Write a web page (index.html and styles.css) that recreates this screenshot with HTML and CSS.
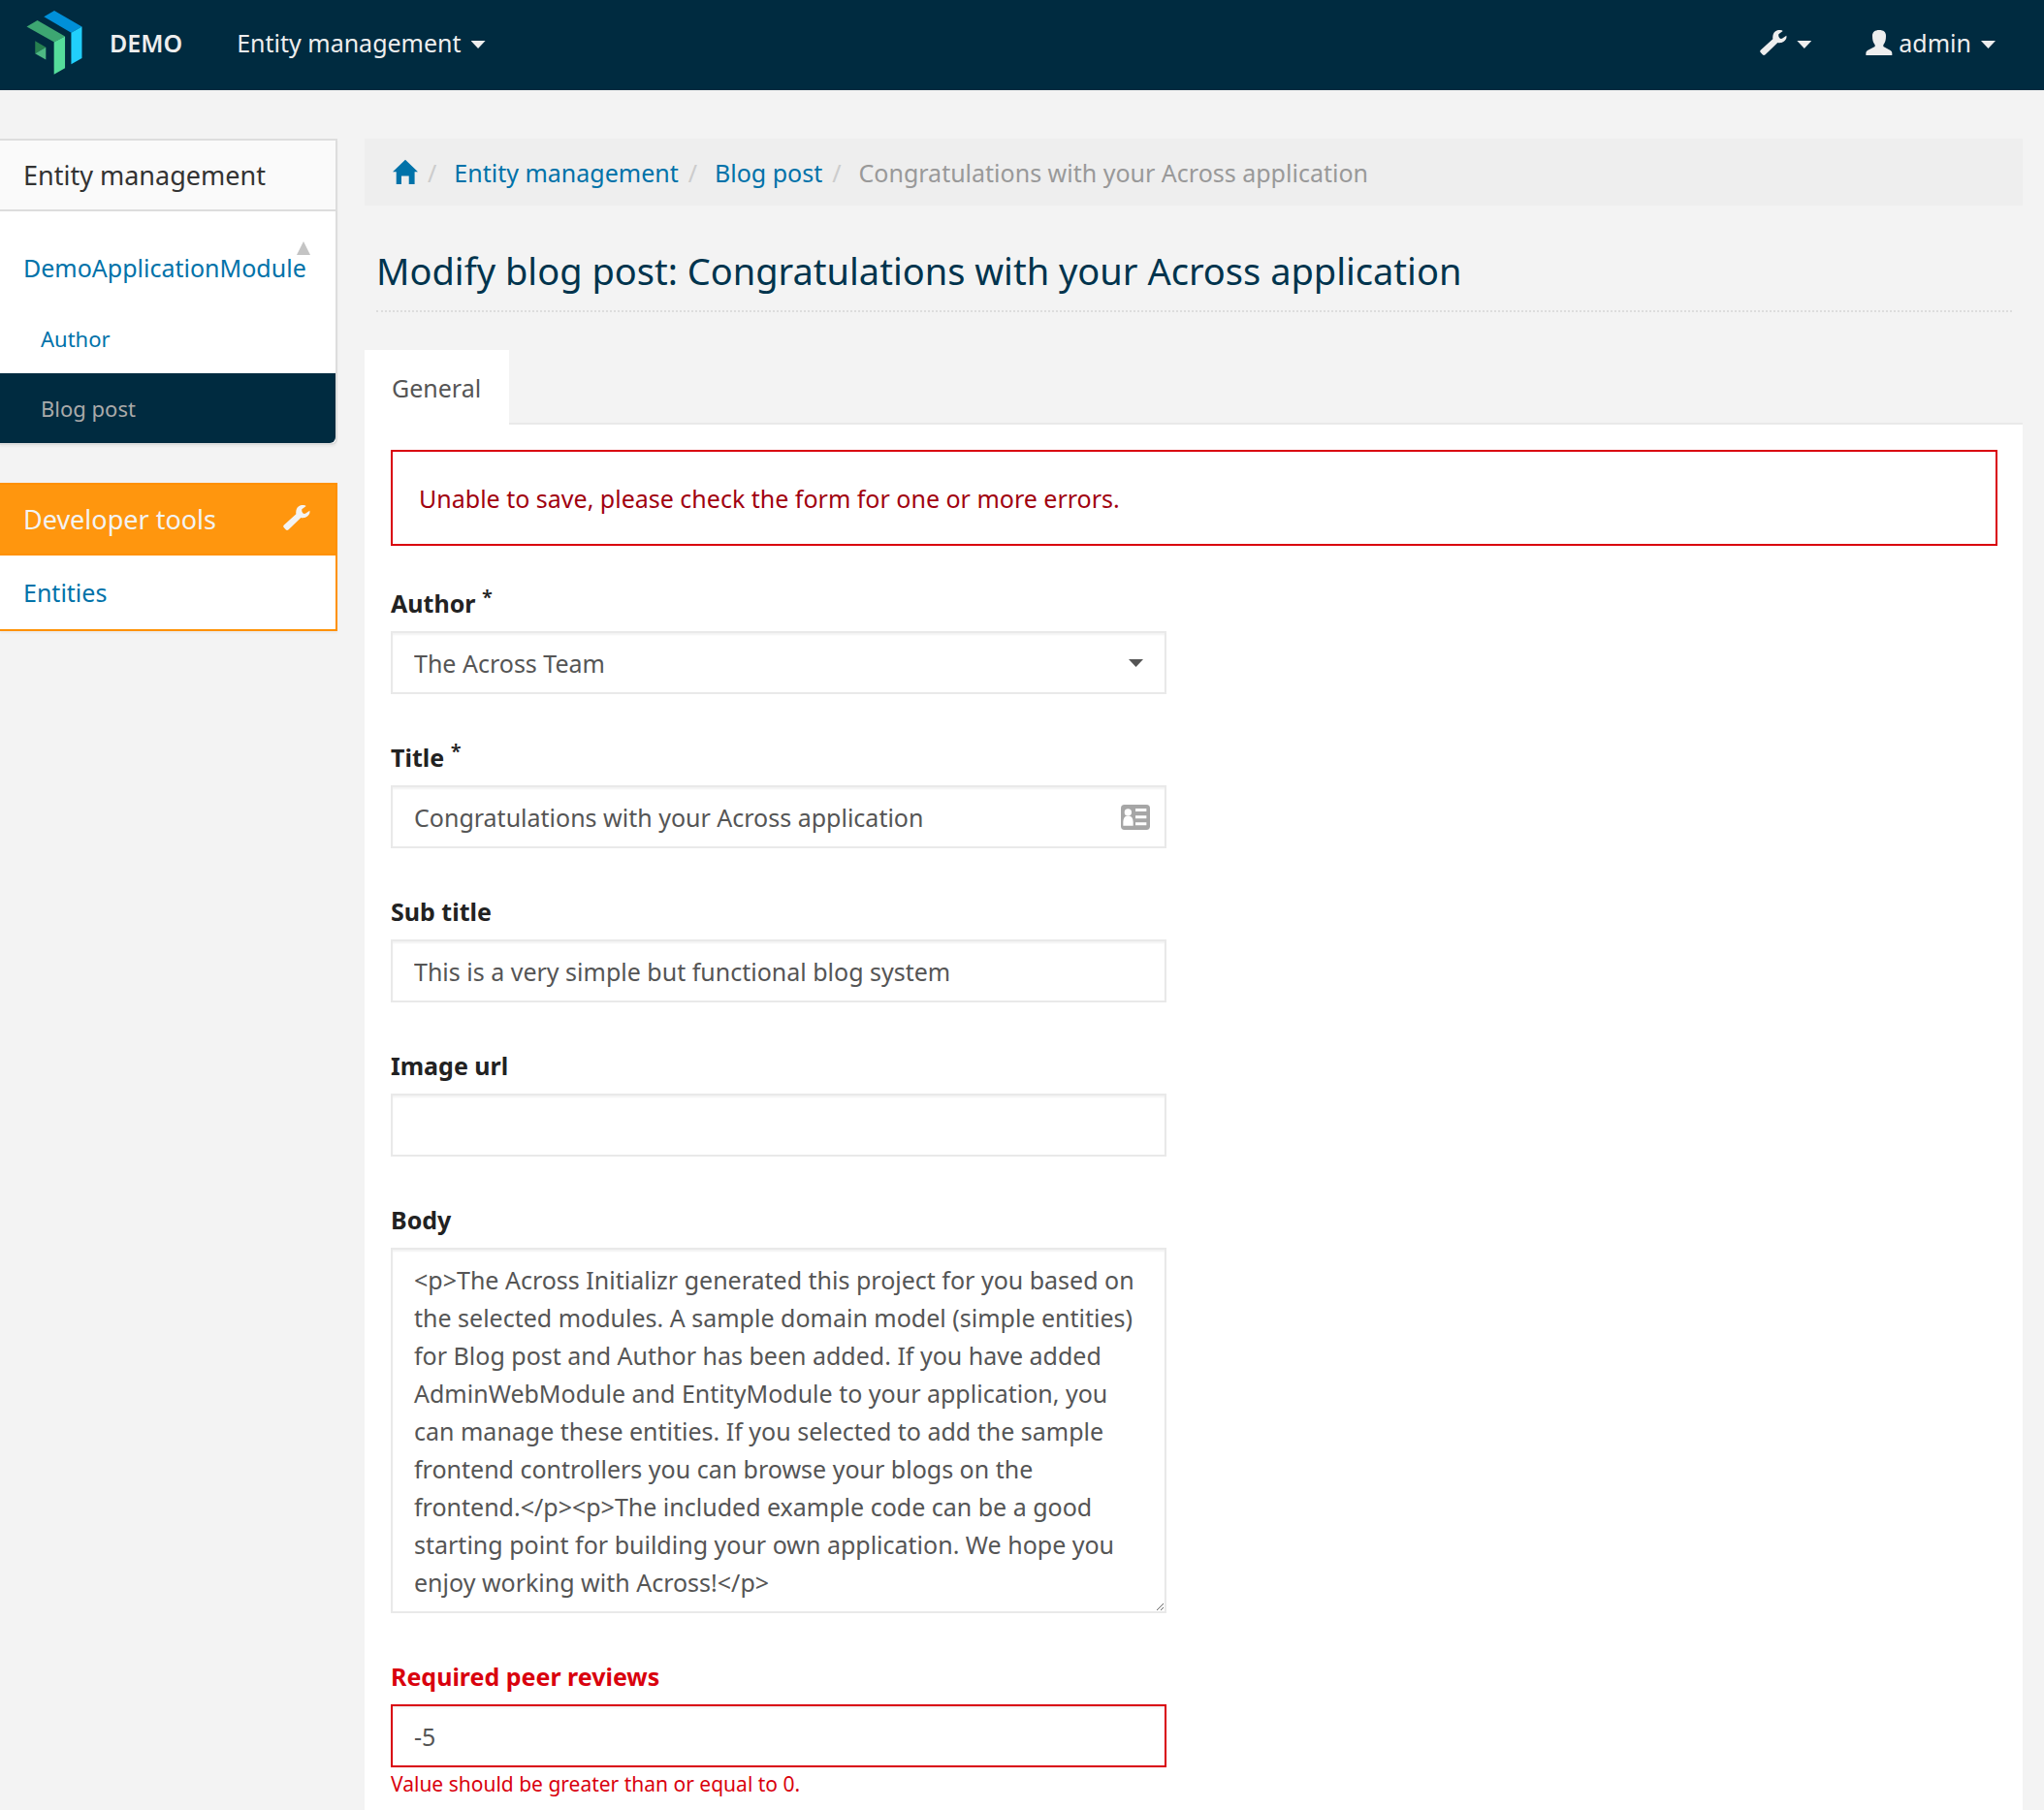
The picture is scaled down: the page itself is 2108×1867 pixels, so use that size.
FILE: index.html
```html
<!DOCTYPE html>
<html lang="en">
<head>
<meta charset="utf-8">
<title>Modify blog post: Congratulations with your Across application</title>
<link rel="stylesheet" href="styles.css">
</head>
<body>
<svg class="sprite" aria-hidden="true">
  <symbol id="wrench" viewBox="0 0 84 78"><path d="M2 62 40 28C38 14 44 4 54 1 62-1 68 0 71 3L58 13C57 18 58 22 61 25 64 28 68 27 71 25L82 17C84 25 80 32 73 36 67 40 60 40 55 39L17 76Q12 80 8 76L2 69Q-1 66 2 62Z"/></symbol>
  <symbol id="user" viewBox="0 0 82 78"><path d="M41 0C55 0 62 6 62 18 62 30 60 38 54 46V51L76 63Q81 66 81 71V78H0V71Q0 66 5 63L28 51V46C22 38 20 30 20 18 20 6 28 0 41 0Z"/></symbol>
  <symbol id="home" viewBox="0 0 84 82"><path d="M42 0 84 40H73V81H54V54H29V81H12V40H0Z"/></symbol>
</svg>

<header class="navbar">
  <a class="brand" href="#">
    <svg class="logo" viewBox="82 33 170 197" aria-hidden="true">
      <path fill="#0090d9" d="M135 52 167 33 252 82 219 101Z"/>
      <path fill="#21cffc" d="M219 101 252 82V179L219 198Z"/>
      <path fill="#3da672" d="M82 82 115 63 200 112 167 130Z"/>
      <path fill="#55dd9b" d="M166 130 200 112V210L166 229Z"/>
      <path fill="#26804f" d="M108 126 141 146 108 165Z"/>
      <path fill="#4db883" d="M108 165 141 146V184Z"/>
    </svg>
    <span>DEMO</span>
  </a>
  <nav class="menu">
    <button type="button" class="toggle">Entity management <span class="caret"></span></button>
  </nav>
  <div class="tools">
    <button type="button" class="toggle" aria-label="Developer tools"><svg class="icon"><use href="#wrench"/></svg><span class="caret"></span></button>
    <button type="button" class="toggle user"><svg class="icon" aria-hidden="true"><use href="#user"/></svg>admin <span class="caret"></span></button>
  </div>
</header>

<div class="page">
  <aside class="sidebar">
    <nav class="panel">
      <h2 class="panel-title">Entity management</h2>
      <a class="module" href="#">DemoApplicationModule<span class="fold"></span></a>
      <a class="entity" href="#">Author</a>
      <a class="entity active" href="#">Blog post</a>
    </nav>
    <nav class="panel developer">
      <h2 class="panel-title">Developer tools <svg class="icon" aria-hidden="true"><use href="#wrench"/></svg></h2>
      <a class="tool" href="#">Entities</a>
    </nav>
  </aside>

  <main class="content">
    <ol class="breadcrumb">
      <li><a href="#" aria-label="Home"><svg class="icon"><use href="#home"/></svg></a></li>
      <li><a href="#">Entity management</a></li>
      <li><a href="#">Blog post</a></li>
      <li>Congratulations with your Across application</li>
    </ol>

    <h1>Modify blog post: Congratulations with your Across application</h1>

    <div class="tabs"><a class="tab" href="#general">General</a></div>

    <section class="pane" id="general">
      <div class="alert" role="alert">Unable to save, please check the form for one or more errors.</div>
      <form class="form">
        <div class="field">
          <label for="author">Author <sup>*</sup></label>
          <div class="control">
            <select id="author"><option>The Across Team</option></select>
            <span class="caret select-caret"></span>
          </div>
        </div>
        <div class="field">
          <label for="title">Title <sup>*</sup></label>
          <div class="control">
            <input id="title" type="text" value="Congratulations with your Across application">
            <svg class="card" viewBox="0 0 90 78" aria-hidden="true">
              <rect width="90" height="78" rx="11" fill="#a6a6a6"/>
              <g fill="#fff"><circle cx="22" cy="24" r="11"/><path d="M7 65V54Q8 38 16 36H28Q37 38 38 54V65Z"/><path d="M45 12H79V21H45ZM45 34H79V43H45ZM45 55H79V64H45Z"/></g>
            </svg>
          </div>
        </div>
        <div class="field">
          <label for="subtitle">Sub title</label>
          <input id="subtitle" type="text" value="This is a very simple but functional blog system">
        </div>
        <div class="field">
          <label for="image">Image url</label>
          <input id="image" type="text">
        </div>
        <div class="field">
          <label for="body">Body</label>
          <textarea id="body" rows="9">&lt;p&gt;The Across Initializr generated this project for you based on the selected modules. A sample domain model (simple entities) for Blog post and Author has been added. If you have added AdminWebModule and EntityModule to your application, you can manage these entities. If you selected to add the sample frontend controllers you can browse your blogs on the frontend.&lt;/p&gt;&lt;p&gt;The included example code can be a good starting point for building your own application. We hope you enjoy working with Across!&lt;/p&gt;</textarea>
        </div>
        <div class="field invalid">
          <label for="reviews">Required peer reviews</label>
          <input id="reviews" type="text" value="-5" aria-describedby="reviews-error">
          <p class="error" id="reviews-error">Value should be greater than or equal to 0.</p>
        </div>
      </form>
    </section>
  </main>
</div>
</body>
</html>
```
FILE: styles.css
```css
* {
  box-sizing: border-box;
}

body {
  margin: 0;
  min-height: 100vh;
  display: flex;
  flex-direction: column;
  background: #f3f3f3;
  color: #555;
  font: 25px/36px "Noto Sans", "Open Sans", sans-serif;
}

a {
  color: #0072a9;
  text-decoration: none;
}

h1, h2, p, ol {
  margin: 0;
  padding: 0;
  font-weight: 400;
}

button, input, select, textarea {
  margin: 0;
  font: inherit;
  color: inherit;
}

.sprite {
  position: absolute;
  width: 0;
  height: 0;
}

.icon {
  flex: none;
  width: 28px;
  height: 26px;
  fill: currentColor;
}

.caret {
  flex: none;
  width: 15px;
  height: 8px;
  background: currentColor;
  clip-path: polygon(0 0, 100% 0, 50% 100%);
}

/* Top bar */
.navbar {
  display: flex;
  align-items: center;
  height: 93px;
  padding: 0 50px 5px 27px;
  background: #002b40;
  color: #eee;
}

.brand {
  display: flex;
  align-items: center;
  gap: 28px;
  color: inherit;
  font-weight: 600;
}

.logo {
  width: 58px;
  height: 66px;
}

.menu {
  margin-left: 56px;
}

.tools {
  display: flex;
  gap: 56px;
  margin-left: auto;
}

.toggle {
  display: flex;
  align-items: center;
  gap: 10px;
  padding: 0;
  border: 0;
  background: none;
}

.toggle .caret {
  margin-top: 4px;
}

.user .icon {
  margin-right: -4px;
}

/* Page columns */
.page {
  flex: 1;
  display: grid;
  grid-template-columns: 348px minmax(0, 1fr);
  column-gap: 28px;
  padding: 50px 22px 0 0;
}

.sidebar {
  display: flex;
  flex-direction: column;
  gap: 39px;
}

.panel {
  border: 2px solid #ddd;
  border-left: 0;
  border-radius: 0 0 6px 0;
  background: #fff;
  box-shadow: 0 2px 2px rgba(0, 0, 0, 0.04);
}

.panel-title {
  display: flex;
  align-items: center;
  justify-content: space-between;
  height: 73px;
  padding: 0 26px 0 24px;
  border-bottom: 2px solid #ddd;
  background: #fafafa;
  color: #333;
  font-size: 27px;
}

.module {
  display: block;
  position: relative;
  padding: 40px 24px 19px;
}

.fold {
  position: absolute;
  top: 31px;
  right: 26px;
  width: 14px;
  height: 14px;
  background: #c4c4c4;
  clip-path: polygon(50% 0, 100% 100%, 0 100%);
}

.entity {
  display: block;
  padding: 0 42px;
  font-size: 22px;
  line-height: 72px;
}

.entity.active {
  border-radius: 0 0 6px 0;
  background: #002b40;
  color: #aaa;
}

.developer {
  border-color: #ff9100;
  border-radius: 0;
}

.developer .panel-title {
  border-color: #ff9100;
  background: #ff960e;
  color: #f3f3f3;
}

.developer .icon {
  margin-top: -4px;
}

.tool {
  display: block;
  padding: 20px 24px;
}

/* Main column */
.content {
  display: flex;
  flex-direction: column;
}

.breadcrumb {
  display: flex;
  align-items: center;
  height: 69px;
  padding: 0 29px;
  background: #eee;
  color: #999;
  list-style: none;
}

.breadcrumb li {
  display: flex;
  align-items: center;
}

.breadcrumb li + li::before {
  content: "/";
  padding: 0 18px 0 10px;
  color: #ccc;
}

.breadcrumb .icon {
  display: block;
  width: 26px;
  height: 27px;
}

h1 {
  margin: 42px 11px 39px 12px;
  padding-bottom: 16px;
  border-bottom: 2px dotted #ddd;
  color: #00344d;
  font-size: 38px;
  line-height: 50px;
}

.tabs {
  display: flex;
}

.tabs::after {
  content: "";
  flex: 1;
  border-bottom: 2px solid #e9e9e9;
}

.tab {
  padding: 21px 29px 20px 28px;
  background: #fff;
  color: #555;
}

.pane {
  flex: 1;
  padding: 26px 26px 12px 27px;
  background: #fff;
}

.alert {
  margin-bottom: 41px;
  padding: 30px 27px 29px;
  border: 2px solid #d9000d;
  color: #a1000f;
}

/* Form */
.form {
  display: flex;
  flex-direction: column;
  gap: 47px;
  max-width: 800px;
}

.field label {
  display: block;
  margin-bottom: 11px;
  color: #222;
  font-weight: 700;
}

sup {
  font-size: 20px;
  font-weight: 600;
  line-height: 0;
}

.control {
  position: relative;
}

input, select, textarea {
  display: block;
  width: 100%;
  height: 65px;
  padding: 0 22px;
  border: 2px solid #e9e9e9;
  border-radius: 0;
  outline: 0;
  background: #fff;
  box-shadow: inset 0 2px 2px rgba(0, 0, 0, 0.05);
}

select {
  appearance: none;
}

textarea {
  height: auto;
  padding: 12px 26px 10px 22px;
  line-height: 39px;
  overflow: hidden;
  resize: vertical;
}

.select-caret {
  position: absolute;
  top: 29px;
  right: 24px;
  pointer-events: none;
}

.card {
  position: absolute;
  top: 20px;
  right: 17px;
  width: 30px;
  height: 26px;
}

.invalid label, .error {
  color: #d9000d;
}

.invalid input {
  border-color: #d9000d;
}

.error {
  margin-top: 2px;
  font-size: 21px;
  line-height: 30px;
}
```
